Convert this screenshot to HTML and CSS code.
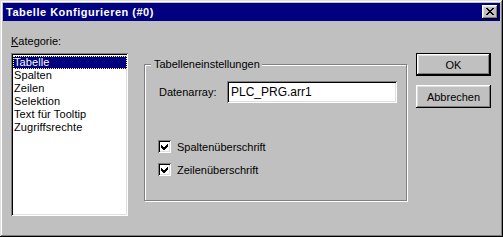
FILE: index.html
```html
<!DOCTYPE html>
<html>
<head>
<meta charset="utf-8">
<link rel="stylesheet" href="styles.css">
</head>
<body>
<div class="window">
  <div class="titlebar">
    <span class="title">Tabelle Konfigurieren (#0)</span>
    <div class="close">
      <svg width="8" height="7" viewBox="0 0 8 7" shape-rendering="crispEdges">
        <path d="M0 0h2v1h-2zM6 0h2v1h-2zM1 1h2v1h-2zM5 1h2v1h-2zM2 2h4v1h-4zM3 3h2v1h-2zM2 4h4v1h-4zM1 5h2v1h-2zM5 5h2v1h-2zM0 6h2v1h-2zM6 6h2v1h-2z" fill="#000"/>
      </svg>
    </div>
  </div>
  <div class="main">
    <div class="left">
      <div class="label"><u>K</u>ategorie:</div>
      <div class="listbox">
        <div class="item selected"><span class="focus">Tabelle</span></div>
        <div class="item">Spalten</div>
        <div class="item">Zeilen</div>
        <div class="item">Selektion</div>
        <div class="item">Text für Tooltip</div>
        <div class="item">Zugriffsrechte</div>
      </div>
    </div>
    <div class="group">
      <span class="legend">Tabelleneinstellungen</span>
      <div class="row">
        <span class="rowlabel">Datenarray:</span>
        <div class="textbox">PLC_PRG.arr1</div>
      </div>
      <div class="checks">
        <div class="check">
          <span class="box"><svg width="9" height="9" viewBox="0 0 9 9" shape-rendering="crispEdges"><path d="M6 1h1v1h-1zM5 2h2v1h-2zM0 2h1v1h-1zM0 3h2v1h-2zM4 3h3v1h-3zM0 4h6v1h-6zM1 5h4v1h-4zM2 6h2v1h-2z" fill="#000"/></svg></span>
          <span>Spaltenüberschrift</span>
        </div>
        <div class="check">
          <span class="box"><svg width="9" height="9" viewBox="0 0 9 9" shape-rendering="crispEdges"><path d="M6 1h1v1h-1zM5 2h2v1h-2zM0 2h1v1h-1zM0 3h2v1h-2zM4 3h3v1h-3zM0 4h6v1h-6zM1 5h4v1h-4zM2 6h2v1h-2z" fill="#000"/></svg></span>
          <span>Zeilenüberschrift</span>
        </div>
      </div>
    </div>
    <div class="buttons">
      <div class="btn default"><span>OK</span></div>
      <div class="btn"><span>Abbrechen</span></div>
    </div>
  </div>
</div>
</body>
</html>
```
FILE: styles.css
```css
html, body {
  margin: 0;
  padding: 0;
  background: #c0c0c0;
}
body {
  font-family: "Liberation Sans", Arial, sans-serif;
  font-size: 11px;
  color: #000;
}
.window {
  width: 503px;
  height: 237px;
  box-sizing: border-box;
  padding: 3px;
  background: #c0c0c0;
  box-shadow: inset -1px -1px #000, inset 1px 1px #dfdfdf, inset -2px -2px #808080, inset 2px 2px #fff;
}
.titlebar {
  height: 18px;
  background: #000080;
  display: flex;
  align-items: center;
  justify-content: space-between;
  padding: 0 2px 0 3px;
}
.title {
  color: #fff;
  font-weight: bold;
  font-size: 11px;
  letter-spacing: 0.5px;
}
.close {
  width: 16px;
  height: 14px;
  box-sizing: border-box;
  background: #c0c0c0;
  box-shadow: inset -1px -1px #000, inset 1px 1px #fff, inset -2px -2px #808080, inset 2px 2px #dfdfdf;
  display: flex;
  align-items: center;
  justify-content: center;
  padding: 0 1px 1px 0;
}
.close svg { display: block; }
.main {
  display: flex;
  align-items: flex-start;
  padding: 14px 0 0 8px;
}
.left {
  width: 117px;
  display: flex;
  flex-direction: column;
}
.label {
  height: 13px;
  line-height: 13px;
}
.listbox {
  margin-top: 5px;
  height: 163px;
  box-sizing: border-box;
  background: #fff;
  padding: 3px 0 0 2px;
  box-shadow: inset 1px 1px #808080, inset -1px -1px #fff, inset 2px 2px #000, inset -2px -2px #dfdfdf;
}
.item {
  height: 13px;
  line-height: 13px;
  padding-left: 1px;
  white-space: nowrap;
  letter-spacing: 0.1px;
}
.item.selected {
  background: #000080;
  color: #fff;
  margin-right: 1px;
  outline: 1px dotted #ffff80;
  outline-offset: -1px;
}
.group {
  position: relative;
  margin: 29px 0 0 16px;
  width: 263px;
  height: 137px;
  box-sizing: border-box;
  border: 1px solid #808080;
  box-shadow: inset 1px 1px #fff, 1px 1px #fff;
  padding: 16px 0 0 14px;
}
.legend {
  position: absolute;
  top: -7px;
  left: 6px;
  padding: 0 2px 0 3px;
  background: #c0c0c0;
  line-height: 13px;
}
.row {
  display: flex;
  align-items: center;
}
.rowlabel {
  width: 68px;
}
.textbox {
  width: 170px;
  height: 22px;
  box-sizing: border-box;
  background: #fff;
  padding: 0 0 0 4px;
  line-height: 22px;
  font-size: 12px;
  box-shadow: inset 1px 1px #808080, inset -1px -1px #fff, inset 2px 2px #000, inset -2px -2px #dfdfdf;
}
.checks {
  margin-top: 37px;
  display: flex;
  flex-direction: column;
  gap: 10px;
}
.check {
  display: flex;
  align-items: center;
  height: 13px;
  margin-left: -1px;
}
.box {
  width: 13px;
  height: 13px;
  box-sizing: border-box;
  background: #fff;
  margin-right: 6px;
  box-shadow: inset 1px 1px #808080, inset -1px -1px #fff, inset 2px 2px #000, inset -2px -2px #dfdfdf;
  display: flex;
  align-items: center;
  justify-content: center;
  padding: 1px 0 0 1px;
}
.box svg { display: block; }
.buttons {
  margin: 18px 0 0 9px;
  display: flex;
  flex-direction: column;
  gap: 9px;
}
.btn {
  width: 75px;
  height: 23px;
  box-sizing: border-box;
  display: flex;
  align-items: center;
  justify-content: center;
  box-shadow: inset -1px -1px #000, inset 1px 1px #fff, inset -2px -2px #808080, inset 2px 2px #dfdfdf;
}
.btn.default {
  box-shadow: inset 0 0 0 1px #000, inset -2px -2px #000, inset 2px 2px #fff, inset -3px -3px #808080, inset 3px 3px #dfdfdf;
}
```
